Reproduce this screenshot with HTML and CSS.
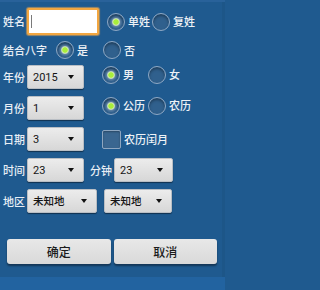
FILE: index.html
```html
<!DOCTYPE html>
<html lang="zh">
<head>
<meta charset="utf-8">
<link rel="stylesheet" href="styles.css">
</head>
<body>
<div class="screen">
  <div class="form">
    <div class="row row-name">
      <span class="label">姓名</span>
      <div class="textbox"><span class="caret"></span></div>
      <div class="radios r-name">
        <div class="radio on"><span class="dot"></span><span class="rt">单姓</span></div>
        <div class="radio"><span class="dot"></span><span class="rt">复姓</span></div>
      </div>
    </div>
    <div class="row row-bazi">
      <span class="label wide">结合八字</span>
      <div class="radios r-bazi">
        <div class="radio on"><span class="dot"></span><span class="rt">是</span></div>
        <div class="radio"><span class="dot"></span><span class="rt">否</span></div>
      </div>
    </div>
    <div class="row row-sp row-year">
      <span class="label">年份</span>
      <div class="spinner"><span class="sv">2015</span><span class="arrow"></span></div>
      <div class="radios r-side">
        <div class="radio on"><span class="dot"></span><span class="rt">男</span></div>
        <div class="radio"><span class="dot"></span><span class="rt">女</span></div>
      </div>
    </div>
    <div class="row row-sp">
      <span class="label">月份</span>
      <div class="spinner"><span class="sv">1</span><span class="arrow"></span></div>
      <div class="radios r-side">
        <div class="radio on"><span class="dot"></span><span class="rt">公历</span></div>
        <div class="radio"><span class="dot"></span><span class="rt">农历</span></div>
      </div>
    </div>
    <div class="row row-sp">
      <span class="label">日期</span>
      <div class="spinner"><span class="sv">3</span><span class="arrow"></span></div>
      <div class="check"><span class="box"></span><span class="rt">农历闰月</span></div>
    </div>
    <div class="row row-sp">
      <span class="label">时间</span>
      <div class="spinner"><span class="sv">23</span><span class="arrow"></span></div>
      <span class="mid-label">分钟</span>
      <div class="spinner sp-min"><span class="sv">23</span><span class="arrow"></span></div>
    </div>
    <div class="row row-sp">
      <span class="label">地区</span>
      <div class="spinner sp-area1"><span class="sv cjk">未知地</span><span class="arrow"></span></div>
      <div class="spinner sp-area2"><span class="sv cjk">未知地</span><span class="arrow"></span></div>
    </div>
    <div class="actions">
      <div class="btn">确定</div>
      <div class="btn">取消</div>
    </div>
  </div>
  <div class="bottom-bar"></div>
</div>
</body>
</html>
```
FILE: styles.css
```css
html, body {
  margin: 0;
  padding: 0;
}
html {
  background: #1f5a8f;
}
body {
  width: 225px;
  height: 290px;
  overflow: hidden;
  background: #1f5a8f;
  font-family: "Noto Sans CJK SC", Roboto, sans-serif;
}
.screen {
  height: 290px;
  display: flex;
  flex-direction: column;
  box-shadow: inset 0 2px 0 #29629a, inset -3px 0 0 #1d5688;
}
.form {
  flex: 1;
  display: flex;
  flex-direction: column;
  padding-top: 8px;
}
.bottom-bar {
  height: 13px;
  background: #2263a0;
}
.row {
  display: flex;
  align-items: center;
  padding-left: 3px;
}
.row-name { height: 27px; }
.row-bazi { height: 20px; margin-top: 5px; }
.row-sp { height: 24px; margin-top: 7px; }
.row-year { margin-top: 5px; }

.label {
  width: 24px;
  flex: none;
  font-size: 11px;
  font-weight: 500;
  line-height: 1;
  color: #e8eef5;
  white-space: nowrap;
}
.label.wide { width: auto; }

.textbox {
  width: 72px;
  height: 27px;
  box-sizing: border-box;
  background: #fff;
  border: 2px solid #f2a640;
  border-radius: 2px;
  box-shadow: 0 0 1px 1px rgba(240, 170, 80, 0.6);
  display: flex;
  align-items: center;
  padding-left: 2px;
}
.caret {
  width: 1px;
  height: 13px;
  background: #7a7a7a;
}

.radios {
  display: flex;
  align-items: center;
}
.r-name { margin-left: 8px; }
.r-bazi { margin-left: 9px; }
.r-side { margin-left: 18px; margin-bottom: 5px; }
.radio {
  display: flex;
  align-items: center;
  gap: 3px;
}
.radios .radio:first-child { width: 46px; }
.r-bazi .radio:first-child { width: 47px; }
.r-name .radio:first-child { width: 45px; }

.dot {
  width: 18px;
  height: 18px;
  box-sizing: border-box;
  border-radius: 50%;
  border: 1px solid #8ea8c4;
  background: #30608d;
  box-shadow: inset 0 2px 3px rgba(0, 0, 0, 0.35);
  flex: none;
}
.radio.on .dot {
  background: radial-gradient(circle, #a8ee3a 0, #a8ee3a 2.3px, #d8ecc0 3.2px, #5a7ea2 4.5px, #33628f 6.5px);
}
.rt {
  font-size: 11px;
  font-weight: 500;
  line-height: 1;
  color: #eef2f6;
  white-space: nowrap;
}

.spinner {
  width: 57px;
  height: 24px;
  box-sizing: border-box;
  flex: none;
  display: flex;
  align-items: center;
  padding-left: 5px;
  background: linear-gradient(#ececec, #d7d7d7);
  border: 1px solid #b9bec4;
  border-radius: 2px;
  box-shadow: 0 1px 1px rgba(0, 0, 0, 0.45);
}
.sv {
  font-family: Roboto, "Noto Sans CJK SC", sans-serif;
  font-size: 11px;
  line-height: 1;
  color: #141414;
}
.sv.cjk {
  font-family: "Noto Sans CJK SC", sans-serif;
  font-size: 10.5px;
  font-weight: 500;
}
.arrow {
  margin-left: auto;
  margin-right: 9px;
  width: 0;
  height: 0;
  border-left: 3.5px solid transparent;
  border-right: 3.5px solid transparent;
  border-top: 4px solid #111;
}
.mid-label {
  margin-left: 6px;
  font-size: 11px;
  font-weight: 500;
  line-height: 1;
  color: #e8eef5;
  white-space: nowrap;
}
.sp-min { margin-left: 2px; width: 59px; }
.sp-area1 { width: 70px; }
.sp-area2 { width: 68px; margin-left: 7px; }

.check {
  display: flex;
  align-items: center;
  gap: 3px;
  margin-left: 18px;
}
.box {
  width: 19px;
  height: 19px;
  box-sizing: border-box;
  border: 1px solid #8ea6c0;
  border-radius: 2px;
  background: #3a6690;
  box-shadow: inset 0 1px 2px rgba(0, 0, 0, 0.3);
}

.actions {
  display: flex;
  gap: 3px;
  margin-top: 26px;
  padding-left: 7px;
  padding-right: 8px;
}
.btn {
  flex: 1;
  height: 25px;
  display: flex;
  align-items: center;
  justify-content: center;
  background: linear-gradient(#e8e8e8, #d9d9d9);
  border-radius: 3px;
  box-shadow: 0 1px 0 #14385a, 0 2px 2px rgba(0, 0, 0, 0.4);
  font-size: 12px;
  font-weight: 500;
  line-height: 1;
  color: #1c1c1c;
}
```
